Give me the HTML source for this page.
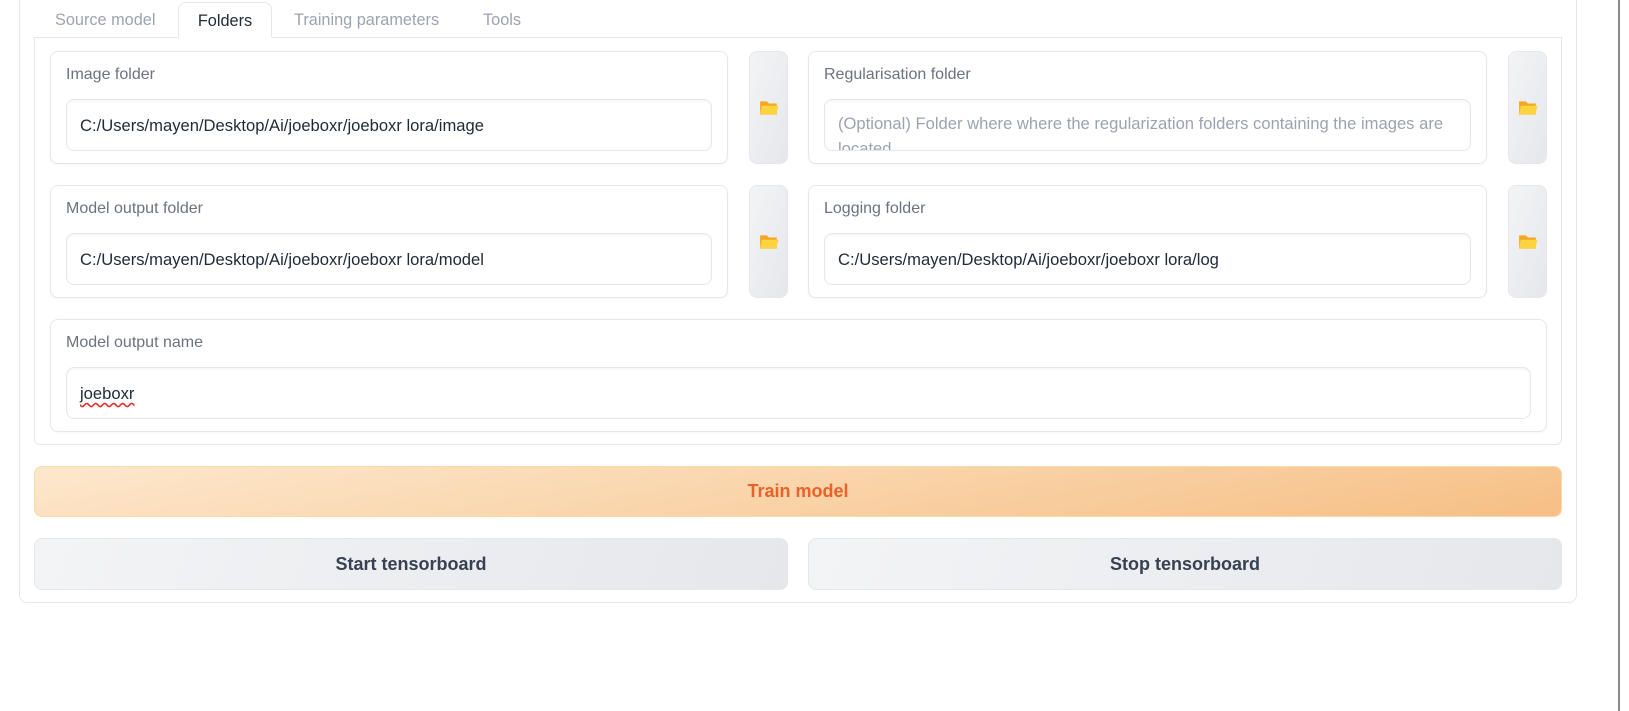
<!DOCTYPE html>
<html><head><meta charset="utf-8"><style>
*{box-sizing:border-box;margin:0;padding:0}
body{width:1629px;height:711px;background:#fff;font-family:"Liberation Sans",sans-serif;position:relative;overflow:hidden}
.a{position:absolute}
.outer{left:19px;top:-10px;width:1558px;height:613px;border:1px solid #e5e7eb;border-radius:8px}
.tab{top:10px;font-size:16.3px;color:#9ca3af;height:27px;line-height:20px}
.tabon{left:178px;top:2px;width:94px;height:36px;border:1px solid #e5e7eb;border-bottom:1px solid #fff;border-radius:8px 8px 0 0;background:#fff;color:#1f2937;font-size:16.3px;text-align:center;line-height:36px;z-index:2}
.panel{left:34px;top:37px;width:1528px;height:408px;border:1px solid #e5e7eb;border-radius:0 0 6px 6px}
.box{border:1px solid #e5e7eb;border-radius:8px;background:#fff;box-shadow:0 1px 2px rgba(0,0,0,.04)}
.lbl{position:absolute;left:15px;top:14px;font-size:16px;color:#6b7280}
.inp{position:absolute;left:15px;top:47px;right:15px;height:52px;border:1px solid #e5e7eb;border-radius:8px;box-shadow:inset 0 1px 2px rgba(0,0,0,.05);font-size:16.6px;color:#1f2937;padding:13px 13px;overflow:hidden;line-height:25px}
.btn{border:1px solid #e5e7eb;border-radius:8px;background:linear-gradient(110deg,#f3f4f6,#e5e7eb);display:flex;align-items:center;justify-content:center}
.big{font-size:18px;font-weight:bold;color:#374151}
</style></head><body>
<div class="a outer"></div>
<div class="a tab" style="left:55px">Source model</div>
<div class="a tabon">Folders</div>
<div class="a tab" style="left:294px">Training parameters</div>
<div class="a tab" style="left:483px">Tools</div>
<div class="a panel"></div>

<div class="a box" style="left:50px;top:51px;width:678px;height:113px"><div class="lbl">Image folder</div><div class="inp">C:/Users/mayen/Desktop/Ai/joeboxr/joeboxr lora/image</div></div>
<div class="a btn" style="left:749px;top:51px;width:39px;height:113px"><svg width="20" height="18" viewBox="0 0 18 16"><path d="M1 2h6l2 2h7v10H1z" fill="#f5a623"/><path d="M2.5 6h15l-2 8H1z" fill="#fdd33f"/></svg></div>
<div class="a box" style="left:808px;top:51px;width:679px;height:113px"><div class="lbl">Regularisation folder</div><div class="inp" style="color:#9ca3af;padding-top:11px">(Optional) Folder where where the regularization folders containing the images are located</div></div>
<div class="a btn" style="left:1508px;top:51px;width:39px;height:113px"><svg width="20" height="18" viewBox="0 0 18 16"><path d="M1 2h6l2 2h7v10H1z" fill="#f5a623"/><path d="M2.5 6h15l-2 8H1z" fill="#fdd33f"/></svg></div>

<div class="a box" style="left:50px;top:185px;width:678px;height:113px"><div class="lbl">Model output folder</div><div class="inp">C:/Users/mayen/Desktop/Ai/joeboxr/joeboxr lora/model</div></div>
<div class="a btn" style="left:749px;top:185px;width:39px;height:113px"><svg width="20" height="18" viewBox="0 0 18 16"><path d="M1 2h6l2 2h7v10H1z" fill="#f5a623"/><path d="M2.5 6h15l-2 8H1z" fill="#fdd33f"/></svg></div>
<div class="a box" style="left:808px;top:185px;width:679px;height:113px"><div class="lbl">Logging folder</div><div class="inp">C:/Users/mayen/Desktop/Ai/joeboxr/joeboxr lora/log</div></div>
<div class="a btn" style="left:1508px;top:185px;width:39px;height:113px"><svg width="20" height="18" viewBox="0 0 18 16"><path d="M1 2h6l2 2h7v10H1z" fill="#f5a623"/><path d="M2.5 6h15l-2 8H1z" fill="#fdd33f"/></svg></div>

<div class="a box" style="left:50px;top:319px;width:1497px;height:113px"><div class="lbl">Model output name</div><div class="inp"><span style="text-decoration:underline wavy #d33;text-underline-offset:3px">joeboxr</span></div></div>

<div class="a btn" style="left:34px;top:466px;width:1528px;height:51px;border-color:#fcd9a8;background:linear-gradient(170deg,#fde8cd,#f6bf85)"><span style="font-size:18px;font-weight:bold;color:#e8622a">Train model</span></div>
<div class="a btn big" style="left:34px;top:538px;width:754px;height:52px">Start tensorboard</div>
<div class="a btn big" style="left:808px;top:538px;width:754px;height:52px">Stop tensorboard</div>

<div class="a" style="left:1618px;top:0;width:2px;height:711px;background:#8a8a8a"></div>
</body></html>
